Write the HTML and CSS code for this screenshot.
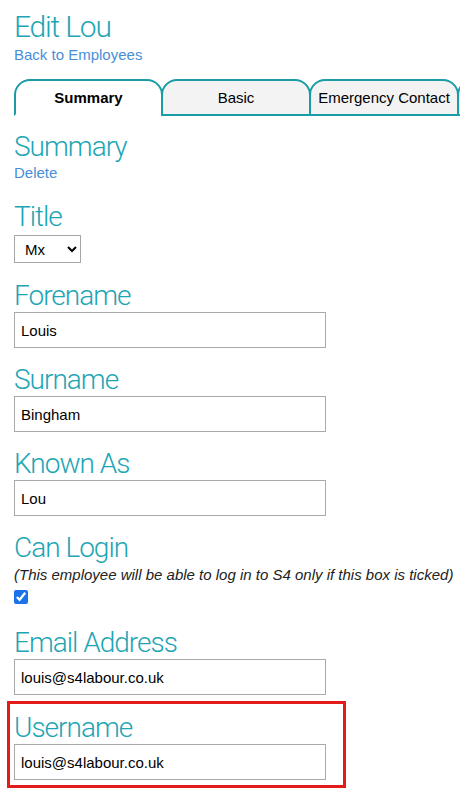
FILE: index.html
```html
<!DOCTYPE html>
<html lang="en">
<head>
<meta charset="utf-8">
<title>Edit Lou</title>
<link rel="stylesheet" href="styles.css">
</head>
<body>
<div class="page">
  <h1 class="page-title">Edit Lou</h1>
  <a class="link back-link" href="#">Back to Employees</a>

  <div class="tabs">
    <div class="tab tab-active">Summary</div>
    <div class="tab">Basic</div>
    <div class="tab">Emergency Contact</div>
    <div class="tab" aria-hidden="true"></div>
  </div>

  <h2 class="section-title">Summary</h2>
  <a class="link delete-link" href="#">Delete</a>

  <div class="field field-title">
    <label class="field-label" for="title">Title</label>
    <select id="title" class="select">
      <option>Mx</option>
      <option>Mr</option>
      <option>Mrs</option>
      <option>Ms</option>
    </select>
  </div>

  <div class="field">
    <label class="field-label" for="forename">Forename</label>
    <input id="forename" class="text-input" type="text" value="Louis">
  </div>

  <div class="field">
    <label class="field-label" for="surname">Surname</label>
    <input id="surname" class="text-input" type="text" value="Bingham">
  </div>

  <div class="field">
    <label class="field-label" for="known">Known As</label>
    <input id="known" class="text-input" type="text" value="Lou">
  </div>

  <div class="field field-login">
    <label class="field-label" for="canlogin">Can Login</label>
    <p class="note">(This employee will be able to log in to S4 only if this box is ticked)</p>
    <input id="canlogin" class="checkbox" type="checkbox" checked>
  </div>

  <div class="field field-email">
    <label class="field-label" for="email">Email Address</label>
    <input id="email" class="text-input" type="text" value="louis@s4labour.co.uk">
  </div>

  <div class="highlight">
    <div class="field">
      <label class="field-label" for="username">Username</label>
      <input id="username" class="text-input" type="text" value="louis@s4labour.co.uk">
    </div>
  </div>
</div>
</body>
</html>
```

FILE: styles.css
```css
html, body {
  margin: 0;
  padding: 0;
  background: #ffffff;
}

body {
  font-family: "Liberation Sans", Arial, sans-serif;
  font-size: 15px;
  color: #000000;
  overflow: hidden;
}

.page {
  padding: 10px 0 0 14px;
  display: flex;
  flex-direction: column;
  align-items: flex-start;
}

.page-title {
  margin: 0;
  font-family: Roboto, "Liberation Sans", sans-serif;
  font-weight: 300;
  font-size: 30px;
  line-height: 34px;
  letter-spacing: -1.2px;
  color: #1ea5b4;
}

.link {
  color: #4a8ed8;
  text-decoration: none;
  font-size: 15px;
  line-height: 17px;
}

.back-link {
  margin-top: 2px;
}

.tabs {
  margin-top: 16px;
  display: flex;
  width: 446px;
  overflow: hidden;
  flex-shrink: 0;
}

.tab {
  flex: 0 0 auto;
  box-sizing: border-box;
  width: 150px;
  height: 37px;
  line-height: 33px;
  text-align: center;
  border: 2px solid #199ca6;
  border-radius: 16px 16px 0 0;
  background: #f3f3f3;
  margin-left: -2px;
  font-size: 15px;
  white-space: nowrap;
}

.tab:first-child {
  margin-left: 0;
}

.tab-active {
  background: #ffffff;
  font-weight: bold;
  border-bottom-color: transparent;
  width: 149px;
}

.section-title {
  margin: 16px 0 0 0;
  font-family: Roboto, "Liberation Sans", sans-serif;
  font-weight: 300;
  font-size: 28px;
  line-height: 30px;
  letter-spacing: -1px;
  color: #1ea5b4;
}

.delete-link {
  margin-top: 2px;
}

.field {
  display: flex;
  flex-direction: column;
  align-items: flex-start;
  margin-top: 17px;
}

.field-title {
  margin-top: 21px;
}

.field-email {
  margin-top: 24px;
}

.field-label {
  font-family: Roboto, "Liberation Sans", sans-serif;
  font-weight: 300;
  font-size: 28px;
  line-height: 30px;
  letter-spacing: -1px;
  color: #1ea5b4;
  margin-bottom: 1px;
}

.select {
  margin: 2px 0 1px 0;
  box-sizing: border-box;
  width: 67px;
  height: 28px;
  font-family: "Liberation Sans", Arial, sans-serif;
  font-size: 15px;
  color: #000;
  background: #ffffff;
  border: 1px solid #a6a6a6;
  border-radius: 0;
  padding: 0 0 0 6px;
}

.text-input {
  box-sizing: border-box;
  width: 312px;
  height: 36px;
  margin: 0;
  padding: 0 6px;
  border: 1px solid #a9a9a9;
  border-radius: 0;
  font-family: "Liberation Sans", Arial, sans-serif;
  font-size: 15px;
  color: #000;
  background: #fff;
}

.note {
  margin: 2px 0 0 0;
  font-style: italic;
  font-size: 15px;
  line-height: 18px;
  color: #222;
}

.checkbox {
  margin: 6px 0 0 0;
  width: 14px;
  height: 14px;
  accent-color: #1a73e8;
}

.highlight {
  margin: 6px 0 0 -7px;
  border: 3px solid #e41b1b;
  padding: 0 17px 5px 4px;
}

.highlight .field {
  margin-top: 9px;
}
```
